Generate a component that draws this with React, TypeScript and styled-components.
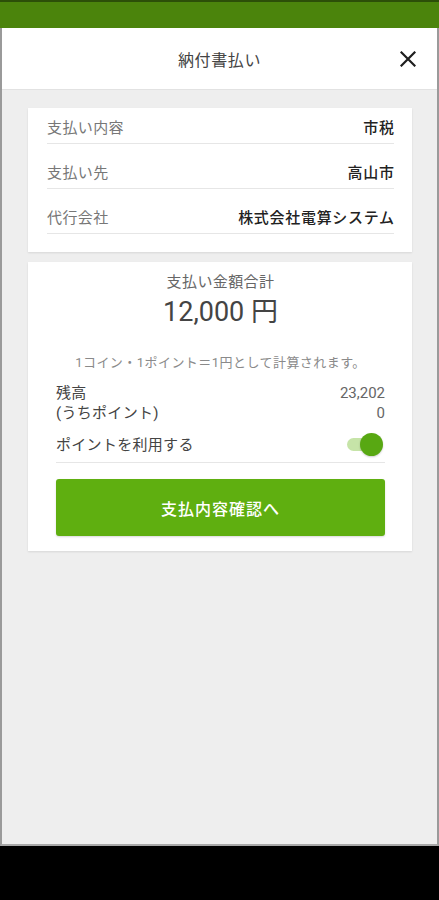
import React from "react";
import styled, { createGlobalStyle } from "styled-components";

const Global = createGlobalStyle`
  html, body { margin: 0; padding: 0; background: #000; }
  body { font-family: Roboto, "Noto Sans CJK JP", sans-serif; }
  * { box-sizing: border-box; }
`;

const Screen = styled.div`
  width: 439px;
  height: 900px;
  display: flex;
  flex-direction: column;
  background: #000;
`;

const StatusBar = styled.div`
  height: 28px;
  flex: none;
  background: #4b840c;
  border-top: 2px solid #2c4f08;
`;

const Frame = styled.div`
  height: 818px;
  flex: none;
  display: flex;
  flex-direction: column;
  background: #eeeeee;
  border-left: 2px solid #9a9a9a;
  border-right: 2px solid #9a9a9a;
  border-bottom: 2px solid #a8a8a8;
`;

const Header = styled.header`
  height: 62px;
  flex: none;
  display: grid;
  grid-template-columns: 1fr auto 1fr;
  align-items: center;
  background: #fff;
  border-bottom: 1px solid #e2e2e2;
`;

const Title = styled.h1`
  grid-column: 2;
  margin: 0;
  font-size: 16px;
  font-weight: 400;
  color: #444;
  letter-spacing: 0.6px;
`;

const CloseButton = styled.button`
  grid-column: 3;
  justify-self: end;
  margin-right: 17px;
  width: 24px;
  height: 24px;
  padding: 0;
  border: none;
  background: none;
  display: flex;
  align-items: center;
  justify-content: center;
`;

const Content = styled.main`
  display: flex;
  flex-direction: column;
  gap: 10px;
  padding: 18px 25px 0 26px;
`;

const Card = styled.section<{ $px: number }>`
  background: #fff;
  box-shadow: 0 1px 2px rgba(0, 0, 0, 0.1);
  padding: 0 ${(p) => p.$px - 1}px 0 ${(p) => p.$px}px;
`;

const InfoCard = styled(Card)`
  padding-bottom: 18px;
`;

const InfoRow = styled.div`
  display: flex;
  justify-content: space-between;
  align-items: center;
  padding: 19px 0 5px;
  line-height: 20px;
  font-size: 15px;
  border-bottom: 1px solid #e6e6e6;
  &:first-child {
    padding-top: 10px;
  }
`;

const Label = styled.span`
  color: #777;
  letter-spacing: 0.4px;
`;

const Value = styled.span`
  color: #222;
  font-weight: 500;
  letter-spacing: 0.7px;
  margin-right: -0.7px;
`;

const PayCard = styled(Card)`
  display: flex;
  flex-direction: column;
  padding-top: 10px;
  padding-bottom: 15px;
`;

const TotalLabel = styled.div`
  text-align: center;
  font-size: 15px;
  line-height: 20px;
  color: #666;
  letter-spacing: 0.4px;
`;

const TotalAmount = styled.div`
  text-align: center;
  margin-top: 3px;
  font-size: 27px;
  line-height: 34px;
  color: #444;
`;

const Note = styled.div`
  text-align: center;
  margin-top: 25px;
  font-size: 13px;
  line-height: 18px;
  color: #8a8a8a;
  letter-spacing: 0.45px;
`;

const Balance = styled.div`
  margin-top: 11px;
  display: flex;
  flex-direction: column;
`;

const BalanceRow = styled.div`
  display: flex;
  justify-content: space-between;
  font-size: 15px;
  line-height: 20px;
  color: #444;
  letter-spacing: 0.3px;
`;

const BalanceValue = styled.span`
  color: #666;
  letter-spacing: 0;
`;

const ToggleRow = styled.div`
  margin-top: 6px;
  height: 34px;
  display: flex;
  justify-content: space-between;
  align-items: center;
  font-size: 15px;
  color: #444;
  letter-spacing: 0.3px;
  border-bottom: 1px solid #e6e6e6;
  padding-bottom: 4px;
`;

const Toggle = styled.div`
  position: relative;
  width: 38px;
  height: 24px;
  margin-right: 2px;
`;

const Track = styled.div`
  position: absolute;
  left: 2px;
  top: 6px;
  width: 30px;
  height: 13px;
  border-radius: 7px;
  background: #c6e4a8;
`;

const Thumb = styled.div`
  position: absolute;
  right: 0;
  top: 1px;
  width: 23px;
  height: 23px;
  border-radius: 50%;
  background: #58a812;
  box-shadow: 0 1px 2px rgba(0, 0, 0, 0.2);
`;

const PrimaryButton = styled.button`
  margin-top: 16px;
  height: 57px;
  border: none;
  border-radius: 3px;
  background: #5faf10;
  color: #fff;
  font-family: Roboto, "Noto Sans CJK JP", sans-serif;
  font-size: 16px;
  font-weight: 500;
  letter-spacing: 1px;
  box-shadow: 0 1px 2px rgba(0, 0, 0, 0.15);
`;

const Bottom = styled.div`
  flex: 1;
  background: #000;
`;

const rows = [
  ["支払い内容", "市税"],
  ["支払い先", "高山市"],
  ["代行会社", "株式会社電算システム"],
];

export default function App() {
  return (
    <>
      <Global />
      <Screen>
        <StatusBar />
        <Frame>
          <Header>
            <Title>納付書払い</Title>
            <CloseButton aria-label="閉じる">
              <svg width="16" height="16" viewBox="0 0 16 16">
                <path d="M1.5 1.5 L14.5 14.5 M14.5 1.5 L1.5 14.5" stroke="#1e1e1e" strokeWidth="2.2" strokeLinecap="square" />
              </svg>
            </CloseButton>
          </Header>
          <Content>
            <InfoCard $px={19}>
              {rows.map(([l, v]) => (
                <InfoRow key={l}>
                  <Label>{l}</Label>
                  <Value>{v}</Value>
                </InfoRow>
              ))}
            </InfoCard>
            <PayCard $px={28}>
              <TotalLabel>支払い金額合計</TotalLabel>
              <TotalAmount>12,000 円</TotalAmount>
              <Note>1コイン・1ポイント＝1円として計算されます。</Note>
              <Balance>
                <BalanceRow>
                  <span>残高</span>
                  <BalanceValue>23,202</BalanceValue>
                </BalanceRow>
                <BalanceRow>
                  <span>(うちポイント)</span>
                  <BalanceValue>0</BalanceValue>
                </BalanceRow>
              </Balance>
              <ToggleRow>
                <span>ポイントを利用する</span>
                <Toggle>
                  <Track />
                  <Thumb />
                </Toggle>
              </ToggleRow>
              <PrimaryButton>支払内容確認へ</PrimaryButton>
            </PayCard>
          </Content>
        </Frame>
        <Bottom />
      </Screen>
    </>
  );
}
